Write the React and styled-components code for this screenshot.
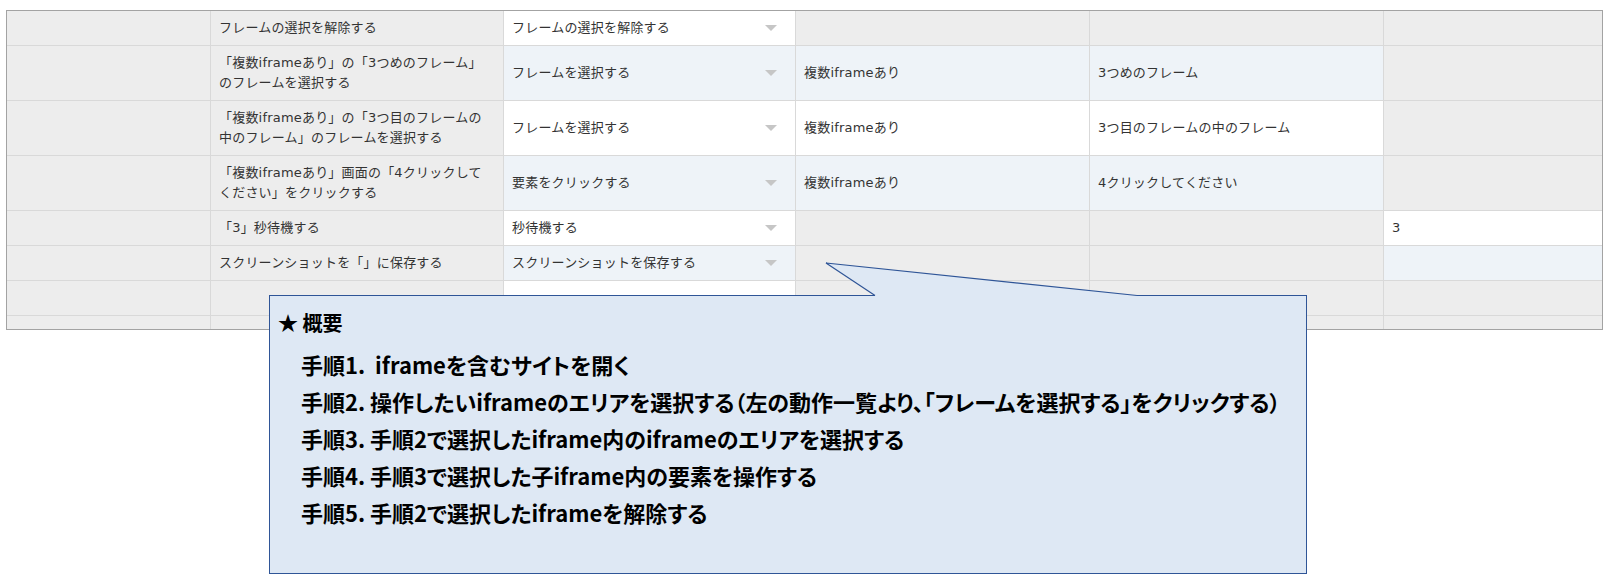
import React from 'react'
import styled, { createGlobalStyle } from 'styled-components'

const GlobalStyle = createGlobalStyle`
  html, body {
    margin: 0;
    padding: 0;
    background: #fff;
  }
  body {
    font-family: "DejaVu Sans", "Noto Sans CJK JP", sans-serif;
  }
`

const Page = styled.div`
  position: relative;
  width: 1611px;
  height: 583px;
  padding: 10px 0 0 6px;
  box-sizing: border-box;
`

const Sheet = styled.div`
  width: 1597px;
  height: 320px;
  box-sizing: border-box;
  border: 1px solid #a3a3a3;
  overflow: hidden;
  background: #ededed;
`

const Row = styled.div`
  display: grid;
  grid-template-columns: 204px 293px 292px 294px 294px 1fr;
`

const bgs = {
  gray: '#ededed',
  white: '#ffffff',
  blue: '#eef3f8',
}

const Cell = styled.div`
  box-sizing: border-box;
  display: flex;
  align-items: center;
  justify-content: space-between;
  min-height: 35px;
  padding: 7px 8px;
  background: ${p => bgs[p.$bg || 'gray']};
  border-right: 1px solid #d9d9d9;
  border-bottom: 1px solid #d9d9d9;
  font-size: 13px;
  letter-spacing: 0.2px;
  line-height: 20px;
  color: #333;
  white-space: nowrap;

  &:last-child {
    border-right: none;
  }
`

const Caret = styled.span`
  width: 0;
  height: 0;
  margin-right: 10px;
  border-left: 6px solid transparent;
  border-right: 6px solid transparent;
  border-top: 6px solid #c6c6c6;
`

const Callout = styled.div`
  position: absolute;
  left: 269px;
  top: 295px;
  width: 1038px;
  height: 279px;
  box-sizing: border-box;
  border: 1px solid #2f5597;
  background: #dee8f4;
  padding: 13px 0 0 8px;
  font-family: "Noto Sans CJK JP", sans-serif;
  font-feature-settings: "palt" 1;
  font-weight: 700;
  color: #000;
`

const Heading = styled.div`
  font-size: 20px;
  line-height: 28px;
`

const Steps = styled.ul`
  list-style: none;
  margin: 9px 0 0;
  padding: 0 0 0 23px;
`

const Step = styled.li`
  font-size: 22px;
  line-height: 37px;
  white-space: pre;
`

const Tail = styled.svg`
  position: absolute;
  left: 820px;
  top: 258px;
  overflow: visible;
`

const rows = [
  {
    desc: ['フレームの選択を解除する'],
    action: 'フレームの選択を解除する',
    bg: 'white',
  },
  {
    desc: ['「複数iframeあり」の「3つめのフレーム」', 'のフレームを選択する'],
    action: 'フレームを選択する',
    bg: 'blue',
    target: '複数iframeあり',
    value: '3つめのフレーム',
  },
  {
    desc: ['「複数iframeあり」の「3つ目のフレームの', '中のフレーム」のフレームを選択する'],
    action: 'フレームを選択する',
    bg: 'white',
    target: '複数iframeあり',
    value: '3つ目のフレームの中のフレーム',
  },
  {
    desc: ['「複数iframeあり」画面の「4クリックして', 'ください」をクリックする'],
    action: '要素をクリックする',
    bg: 'blue',
    target: '複数iframeあり',
    value: '4クリックしてください',
  },
  {
    desc: ['「3」秒待機する'],
    action: '秒待機する',
    bg: 'white',
    wait: '3',
  },
  {
    desc: ['スクリーンショットを「」に保存する'],
    action: 'スクリーンショットを保存する',
    bg: 'blue',
    wait: '',
  },
  { desc: [], action: '', bg: 'white' },
  { desc: [], action: '', bg: 'blue' },
]

const steps = [
  '手順1.  iframeを含むサイトを開く',
  '手順2. 操作したいiframeのエリアを選択する（左の動作一覧より、「フレームを選択する」をクリックする）',
  '手順3. 手順2で選択したiframe内のiframeのエリアを選択する',
  '手順4. 手順3で選択した子iframe内の要素を操作する',
  '手順5. 手順2で選択したiframeを解除する',
]

const App = () => {
  return (
    <Page>
      <GlobalStyle />
      <Sheet>
        {rows.map((r, i) => {
          const hasTarget = r.target !== undefined
          const hasWait = r.wait !== undefined
          return (
            <Row key={i}>
              <Cell />
              <Cell>
                <span>
                  {r.desc.map((line, j) => (
                    <React.Fragment key={j}>
                      {j > 0 && <br />}
                      {line}
                    </React.Fragment>
                  ))}
                </span>
              </Cell>
              <Cell $bg={r.bg}>
                <span>{r.action}</span>
                <Caret />
              </Cell>
              <Cell $bg={hasTarget ? r.bg : 'gray'}>{r.target}</Cell>
              <Cell $bg={hasTarget ? r.bg : 'gray'}>{r.value}</Cell>
              <Cell $bg={hasWait ? r.bg : 'gray'}>{r.wait}</Cell>
            </Row>
          )
        })}
      </Sheet>

      <Callout>
        <Heading>★ 概要</Heading>
        <Steps>
          {steps.map((s, i) => (
            <Step key={i}>{s}</Step>
          ))}
        </Steps>
      </Callout>
      <Tail width="330" height="40" viewBox="0 0 330 40">
        <polygon points="6,5 55,37 55,39 317,39 317,37" fill="#dee8f4" />
        <polyline points="55,37.5 6,5 317,37.5" fill="none" stroke="#2f5597" strokeWidth="1.2" />
      </Tail>
    </Page>
  )
}

export default App
